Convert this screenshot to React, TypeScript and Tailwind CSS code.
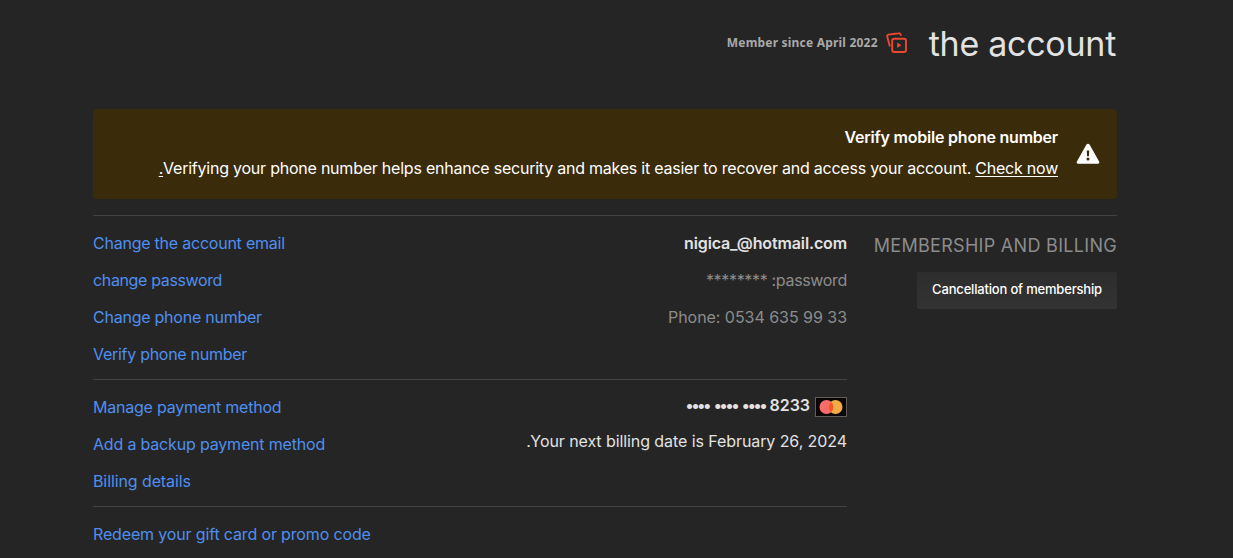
import type { ReactNode } from 'react';

const ProfileIcon = () => (
  <svg width="22" height="22" viewBox="0 0 22 22" fill="none" stroke="#e8492f" strokeWidth="1.9">
    <rect x="6.2" y="6.7" width="13.8" height="13.3" rx="2" />
    <path d="M3.9 14.6 1.2 4.6c-.2-1 .2-1.8 1.2-2L12.6 1.3c1-.2 1.8.3 2 1.3l.3 1.2" />
    <path d="M11.2 10.6v5.4l4.2-2.7z" fill="#e8492f" stroke="none" />
  </svg>
);

const WarningIcon = () => (
  <svg width="24" height="22" viewBox="0 0 24 22">
    <path
      d="M10.3 1.8c.8-1.3 2.6-1.3 3.4 0l9.4 16.6c.6 1.2 0 2.3-1.2 2.3H2.1C.9 20.7.3 19.6.9 18.4z"
      fill="#fff"
    />
    <path d="M10.7 7.6h2.6l-.4 5.6h-1.8z" fill="#3a2b0a" />
    <circle cx="12" cy="15.9" r="1.5" fill="#3a2b0a" />
  </svg>
);

const MastercardIcon = () => (
  <svg width="32" height="20" viewBox="0 0 32 20">
    <rect x=".5" y=".5" width="31" height="19" fill="#090504" stroke="#625d58" />
    <circle cx="11.5" cy="10" r="7" fill="#f96c6b" />
    <circle cx="20.5" cy="10" r="7" fill="#f3ac43" />
    <path d="M16 4.7a7 7 0 0 1 0 10.6 7 7 0 0 1 0-10.6z" fill="#f2552c" />
  </svg>
);

const ActionLink = ({ className, children }: { className: string; children: ReactNode }) => (
  <li className="flex h-[37px] items-center">
    <a href="#" className={className}>
      {children}
    </a>
  </li>
);

const App = () => {
  return (
    <main className="h-[558px] overflow-hidden bg-[#252525] pl-[93px] font-['Inter',sans-serif] text-base whitespace-nowrap text-[#e2e2e2]">
      <div className="w-[1024px]">
        <header className="flex h-[109px] items-start justify-end pt-5 pr-px">
          <p className="mt-3.5 font-['Noto_Sans',sans-serif] text-xs leading-[18px] font-bold tracking-[0.2px] text-[#a9a9a9]">
            Member since April 2022
          </p>
          <span className="mt-3 ml-2">
            <ProfileIcon />
          </span>
          <h1 className="ml-[21px] text-[34px] leading-[48px] tracking-[-0.27px]">the account</h1>
        </header>

        <section className="flex h-[90px] items-center justify-end rounded-sm bg-[#3a2b0a] pr-[17px] text-white">
          <div className="pb-1 text-right">
            <h2 className="h-[31px] leading-6 font-semibold tracking-[-0.22px]">
              Verify mobile phone number
            </h2>
            <p className="leading-6 tracking-[-0.23px]">
              <span className="underline underline-offset-2">.</span>
              Verifying your phone number helps enhance security and makes it easier to recover and
              access your account.{' '}
              <a href="#" className="underline underline-offset-2">
                Check now
              </a>
            </p>
          </div>
          <span className="ml-[18px]">
            <WarningIcon />
          </span>
        </section>

        <div className="mt-4 flex border-t border-[#434343]">
          <div className="w-[754px]">
            <section className="flex h-[163px] justify-between pt-2">
              <ul className="text-[#4f8ff0]">
                <ActionLink className="tracking-[-0.23px]">Change the account email</ActionLink>
                <ActionLink className="tracking-[-0.36px]">change password</ActionLink>
                <ActionLink className="tracking-[-0.24px]">Change phone number</ActionLink>
                <ActionLink className="tracking-[-0.28px]">Verify phone number</ActionLink>
              </ul>
              <ul className="pt-px text-right leading-[37px] text-[#8c8c8c]">
                <li className="font-semibold tracking-[-0.13px] text-[#e2e2e2]">
                  nigica_@hotmail.com
                </li>
                <li className="tracking-[-0.33px]">******** :password</li>
                <li className="tracking-[-0.04px]">Phone: 0534 635 99 33</li>
              </ul>
            </section>

            <section className="flex h-[127px] justify-between border-t border-[#434343] pt-2">
              <ul className="text-[#4f8ff0]">
                <ActionLink className="tracking-[-0.23px]">Manage payment method</ActionLink>
                <ActionLink className="tracking-[-0.18px]">Add a backup payment method</ActionLink>
                <ActionLink className="tracking-[-0.1px]">Billing details</ActionLink>
              </ul>
              <div className="flex flex-col items-end">
                <div className="flex h-[35px] items-center gap-[5px] pt-0.5">
                  <span className="pb-[3px] font-semibold">
                    <span className="tracking-[-2.15px] [word-spacing:2.6px]">•••• •••• ••••</span>{' '}
                    8233
                  </span>
                  <MastercardIcon />
                </div>
                <p className="leading-9 tracking-[-0.08px]">
                  .Your next billing date is February 26, 2024
                </p>
              </div>
            </section>

            <section className="border-t border-[#434343] pt-2">
              <ul className="text-[#4f8ff0]">
                <ActionLink className="tracking-[-0.15px]">
                  Redeem your gift card or promo code
                </ActionLink>
              </ul>
            </section>
          </div>

          <aside className="flex flex-1 flex-col items-end pt-[17px]">
            <h2 className="h-[39px] text-lg leading-[26px] tracking-[0.3px] text-[#8c8c8c]">
              MEMBERSHIP AND BILLING
            </h2>
            <button
              type="button"
              className="h-[37px] w-[200px] rounded-xs bg-linear-to-b from-[#2d2d2d] to-[#333333] pb-0.5 text-[13px] font-medium tracking-[-0.18px] text-white"
            >
              Cancellation of membership
            </button>
          </aside>
        </div>
      </div>
    </main>
  );
};

export default App;
